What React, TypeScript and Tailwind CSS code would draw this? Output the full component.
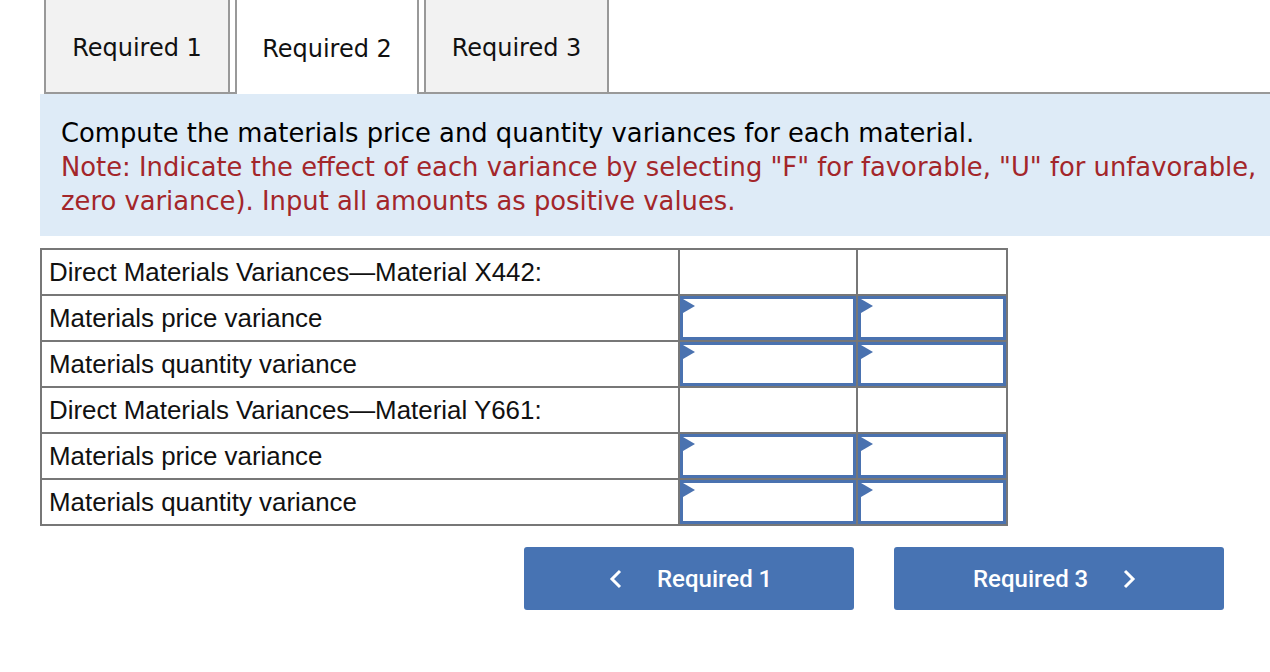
import React from "react";

const Arrow = () => (
  <svg width="12" height="14" viewBox="0 0 12 14" className="absolute left-0 top-0">
    <polygon points="0,0 12,7 0,14" fill="#4a72b0" />
  </svg>
);

function LabelRow({ text }: { text: string }) {
  return (
    <div className="flex h-[46px] border-t-2 border-[#777]">
      <div className="w-[638px] flex items-center pl-[7px] border-r-2 border-[#777]">{text}</div>
      <div className="w-[178px] border-r-2 border-[#777]"></div>
      <div className="flex-1"></div>
    </div>
  );
}

function InputRow({ text }: { text: string }) {
  return (
    <div className="flex h-[46px] border-t-2 border-[#777]">
      <div className="w-[638px] flex items-center pl-[7px] border-r-2 border-[#777]">{text}</div>
      <div className="w-[178px] border-r-2 border-[#777] p-0">
        <div className="relative h-full border-[3px] border-[#4a72b0]">
          <Arrow />
        </div>
      </div>
      <div className="flex-1">
        <div className="relative h-full border-[3px] border-[#4a72b0]">
          <Arrow />
        </div>
      </div>
    </div>
  );
}

export default function App() {
  return (
    <div className="w-[1270px] h-[672px] bg-white overflow-hidden relative">
      {/* Tabs */}
      <div className="flex pl-[44px] h-[94px] items-stretch text-[24px] text-[#111]" style={{ fontFamily: "'DejaVu Sans', Verdana, sans-serif" }}>
        <div className="w-[186px] bg-[#f2f2f2] border-l-2 border-r-2 border-b-2 border-[#999] flex items-center justify-center pt-[3px]">
          Required 1
        </div>
        <div className="w-[5px] border-b-2 border-[#999]"></div>
        <div className="w-[184px] bg-white border-l-2 border-r-2 border-[#999] flex items-center justify-center pt-[3px]">
          Required 2
        </div>
        <div className="w-[5px] border-b-2 border-[#999]"></div>
        <div className="w-[185px] bg-[#f2f2f2] border-l-2 border-r-2 border-b-2 border-[#999] flex items-center justify-center pt-[3px]">
          Required 3
        </div>
        <div className="flex-1 border-b-2 border-[#999]"></div>
      </div>
      {/* Panel */}
      <div className="ml-[40px] bg-[#deebf7] h-[142px] pl-[21px] pt-[22px] text-[25.8px] leading-[34px] whitespace-nowrap" style={{ fontFamily: "'DejaVu Sans', Verdana, sans-serif" }}>
        <div className="text-black">Compute the materials price and quantity variances for each material.</div>
        <div className="text-[#a3262a]">Note: Indicate the effect of each variance by selecting "F" for favorable, "U" for unfavorable,</div>
        <div className="text-[#a3262a]">zero variance). Input all amounts as positive values.</div>
      </div>
      {/* Table */}
      <div className="ml-[40px] mt-[12px] w-[968px] border-2 border-t-0 border-[#777] text-[25.9px] text-[#111]" style={{ fontFamily: "'Liberation Sans', Arial, sans-serif" }}>
        <LabelRow text="Direct Materials Variances—Material X442:" />
        <InputRow text="Materials price variance" />
        <InputRow text="Materials quantity variance" />
        <LabelRow text="Direct Materials Variances—Material Y661:" />
        <InputRow text="Materials price variance" />
        <InputRow text="Materials quantity variance" />
      </div>
      {/* Buttons */}
      <div className="flex ml-[524px] mt-[21px] gap-[40px]" style={{ fontFamily: "Roboto, sans-serif" }}>
        <div className="w-[330px] h-[63px] bg-[#4773b3] rounded-[3px] flex items-center justify-start pl-[85px] text-white text-[24px] font-medium">
          <svg width="14" height="22" viewBox="0 0 14 22" className="mr-[34px]">
            <polyline points="11,3 3,11 11,19" fill="none" stroke="white" strokeWidth="3" />
          </svg>
          <span>Required 1</span>
        </div>
        <div className="w-[330px] h-[63px] bg-[#4773b3] rounded-[3px] flex items-center justify-start pl-[79px] text-white text-[24px] font-medium">
          <span>Required 3</span>
          <svg width="14" height="22" viewBox="0 0 14 22" className="ml-[34px]">
            <polyline points="3,3 11,11 3,19" fill="none" stroke="white" strokeWidth="3" />
          </svg>
        </div>
      </div>
    </div>
  );
}
